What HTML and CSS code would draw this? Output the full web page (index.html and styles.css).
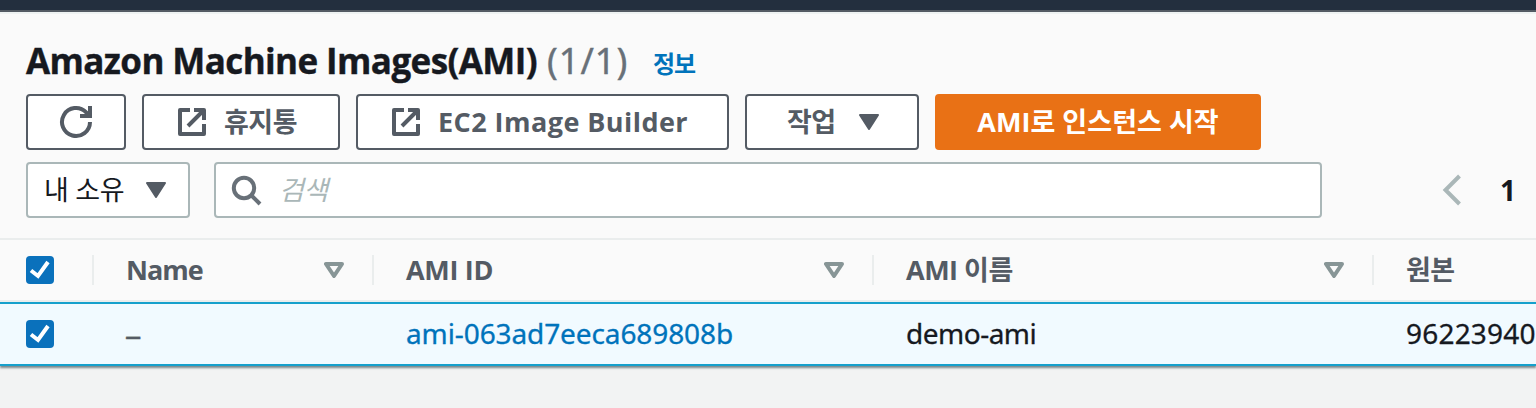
FILE: index.html
```html
<!DOCTYPE html>
<html lang="ko">
<head>
<meta charset="utf-8">
<title>Amazon Machine Images(AMI)</title>
<link rel="stylesheet" href="styles.css">
</head>
<body>
<svg width="0" height="0" class="defs">
  <symbol id="external" viewBox="0 0 28 28"><path d="M12 2H2V26H26V16M16 2H26V12M25 3L10 18" fill="none" stroke="currentColor" stroke-width="4" stroke-linejoin="round"/><path d="M19 2H26V9Z" fill="currentColor"/></symbol>
  <symbol id="caret" viewBox="0 0 20 16"><path d="M1 1H19L10 15Z" fill="currentColor" stroke="currentColor" stroke-width="2" stroke-linejoin="round"/></symbol>
  <symbol id="sort" viewBox="0 0 20 16"><path d="M2 2H18L10 14Z" fill="none" stroke="currentColor" stroke-width="4" stroke-linejoin="round"/></symbol>
  <symbol id="check" viewBox="0 0 28 28"><path d="M5 14.5L12 20L22 6" fill="none" stroke="#fff" stroke-width="4"/></symbol>
</svg>
<div class="topbar"></div>
<main class="panel">
  <header class="heading">
    <h1 class="title">Amazon Machine Images(AMI)</h1>
    <span class="count">(1/1)</span>
    <a class="info">정보</a>
  </header>
  <div class="actions">
    <button class="btn refresh"><svg width="34" height="34" viewBox="0 0 34 34" fill="none" stroke="currentColor" stroke-width="4"><path d="M31 17A14 14 0 1 1 27 7.2L31 11"/><path d="M21 11H31V1"/></svg></button>
    <button class="btn trash"><svg class="ext"><use href="#external"/></svg><span class="ko">휴지통</span></button>
    <button class="btn builder"><svg class="ext"><use href="#external"/></svg><span class="builder-text">EC2 Image Builder</span></button>
    <button class="btn work"><span class="ko">작업</span><svg class="caret"><use href="#caret"/></svg></button>
    <button class="btn launch"><span class="launch-text">AMI로 인스턴스 시작</span></button>
  </div>
  <div class="filters">
    <div class="field owner"><span class="ko owner-text">내 소유</span><svg class="caret"><use href="#caret"/></svg></div>
    <div class="field search"><svg width="32" height="32" viewBox="0 0 32 32" fill="none" stroke="currentColor" stroke-width="4"><circle cx="13" cy="14" r="10.2"/><path d="M20 21L29 30"/></svg><span class="placeholder">검색</span></div>
    <nav class="pages"><svg width="20" height="32" viewBox="0 0 20 32"><path d="M17.5 2L3.5 16L17.5 30" fill="none" stroke="currentColor" stroke-width="4"/></svg><span class="page">1</span></nav>
  </div>
  <section class="table">
    <div class="row head">
      <div class="cell select"><svg class="checkbox"><use href="#check"/></svg></div>
      <div class="cell name"><span class="t-name">Name</span><svg class="sort"><use href="#sort"/></svg></div>
      <div class="cell wide"><span class="t-id">AMI ID</span><svg class="sort"><use href="#sort"/></svg></div>
      <div class="cell wide"><span class="t-label">AMI 이름</span><svg class="sort"><use href="#sort"/></svg></div>
      <div class="cell last"><span class="ko">원본</span></div>
    </div>
    <div class="row selected">
      <div class="cell select"><svg class="checkbox"><use href="#check"/></svg></div>
      <div class="cell name"><span class="dash">–</span></div>
      <div class="cell wide"><a class="link">ami-063ad7eeca689808b</a></div>
      <div class="cell wide"><span class="value">demo-ami</span></div>
      <div class="cell last"><span class="source">96223940</span></div>
    </div>
  </section>
</main>
</body>
</html>
```
FILE: styles.css
```css
* { box-sizing: border-box; }
body {
  margin: 0;
  width: 1536px;
  height: 408px;
  overflow: hidden;
  background: #f2f3f3;
  color: #16191f;
  font: 28px/40px "Noto Sans", "Noto Sans CJK KR", sans-serif;
}
.defs { display: none; }
svg { display: block; flex: none; }
span, a { white-space: nowrap; }
.topbar { height: 12px; background: #232f3e; border-bottom: 2px solid #545b64; }
.panel {
  height: 354px;
  background: #fafafa;
  border-top: 2px solid #eef2f2;
  box-shadow: 0 2px 2px rgba(0, 28, 36, .5);
}
.title, .btn, .head, .page { font-family: "Open Sans", "Noto Sans CJK KR", sans-serif; font-weight: 700; }
.heading { display: flex; height: 80px; padding: 22px 0 0 26px; align-items: baseline; }
.title { margin: 0; font-size: 35px; line-height: 50px; letter-spacing: -.6px; white-space: nowrap; width: 521px; -webkit-text-stroke: .4px; }
.count { width: 106px; font-size: 36px; line-height: 50px; letter-spacing: 1px; color: #687078; -webkit-text-stroke: .4px; }
.info { position: relative; top: -1px; font-size: 24px; line-height: 30px; font-weight: 700; color: #0073bb; letter-spacing: -1px; }
.actions { display: flex; gap: 16px; padding-left: 26px; height: 56px; }
.btn {
  display: flex;
  align-items: center;
  height: 56px;
  padding: 0;
  border: 2px solid #545b64;
  border-radius: 4px;
  background: #fff;
  color: #545b64;
  font-size: 28px;
  line-height: 40px;
}
.ext { width: 28px; height: 28px; }
.caret { width: 20px; height: 16px; color: #545b64; }
.ko { font-size: 27px; letter-spacing: -.5px; }
.refresh { width: 100px; justify-content: center; }
.trash { width: 198px; padding-left: 34px; gap: 18px; }
.builder { width: 373px; padding-left: 34px; gap: 18px; }
.builder-text { font-size: 27px; letter-spacing: .45px; }
.work { width: 174px; padding-left: 40px; gap: 23px; }
.launch { width: 326px; justify-content: center; background: #e97115; border-color: #e97115; color: #fff; }
.launch-text { font-size: 27px; letter-spacing: .05px; }
.filters { display: flex; margin-top: 12px; padding-left: 26px; }
.field { display: flex; align-items: center; height: 56px; background: #fff; border: 2px solid #aab7b8; border-radius: 4px; }
.owner { width: 164px; margin-right: 24px; padding-left: 16px; gap: 22px; }
.owner-text { letter-spacing: -.35px; }
.search { width: 1108px; padding-left: 15px; gap: 16px; color: #687078; }
.placeholder { font-size: 27px; letter-spacing: -.6px; font-style: italic; color: #aab7b8; }
.pages { display: flex; align-items: center; margin-left: 120px; gap: 38px; color: #aab7b8; }
.page { color: #16191f; }
.table { margin-top: 20px; border-top: 2px solid #eaeded; }
.row { display: flex; align-items: center; overflow: hidden; }
.head { height: 62px; color: #545b64; border-bottom: 2px solid #eaeded; }
.selected { height: 64px; background: #f1faff; border: solid #16a0cc; border-width: 2px 0; -webkit-text-stroke: .3px; }
.cell { display: flex; flex: none; align-items: center; justify-content: space-between; height: 30px; padding: 0 28px 0 32px; }
.selected .wide, .selected .last { padding-bottom: 2px; }
.head .cell { border-right: 2px solid #eaeded; }
.select { width: 94px; padding: 0 0 0 26px; }
.name { width: 280px; }
.wide { width: 500px; }
.head .last { border-right: 0; }
.last { width: 162px; padding-right: 0; }
.checkbox { width: 28px; height: 28px; border-radius: 4px; background: #0a71bc; }
.sort { width: 20px; height: 16px; color: #879596; }
.t-name { font-size: 27px; letter-spacing: -1px; }
.t-id { font-size: 27px; letter-spacing: -.3px; }
.t-label { font-size: 27px; letter-spacing: -.5px; }
.link { color: #0073bb; letter-spacing: -.1px; }
.value { letter-spacing: -.5px; }
.source { letter-spacing: .2px; width: 130px; overflow: hidden; }
.dash { color: #545b64; margin-left: -1px; padding-bottom: 1px; transform: scaleX(1.2); transform-origin: 1px 50%; }
```
